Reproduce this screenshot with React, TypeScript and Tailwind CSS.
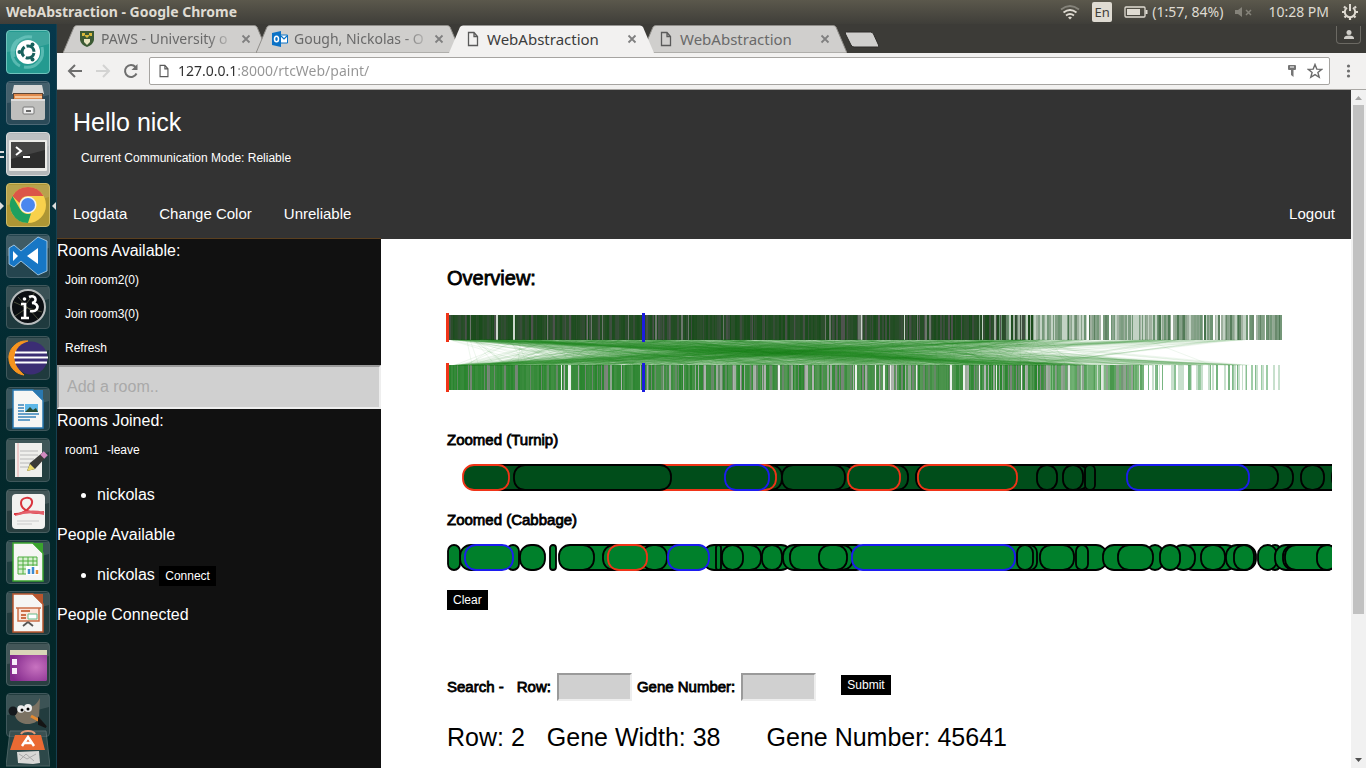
import React, { ReactNode } from "react";

/* ---------- deterministic data for the genome overview ---------- */

function makeRandom(seed: number) {
  let s = seed;
  return () => {
    s = (s + 0x6d2b79f5) | 0;
    let t = Math.imul(s ^ (s >>> 15), 1 | s);
    t = (t + Math.imul(t ^ (t >>> 7), 61 | t)) ^ t;
    return ((t ^ (t >>> 14)) >>> 0) / 4294967296;
  };
}

type Stripe = { x: number; w: number; color: string };

function mix(a: number[], b: number[], t: number) {
  return `rgb(${a.map((v, i) => Math.round(v + (b[i] - v) * t)).join(",")})`;
}

const OVERVIEW_WIDTH = 835;
const WHITE = [255, 255, 255];

function buildStripes(seed: number, colorAt: (x: number, rnd: () => number) => string) {
  const rnd = makeRandom(seed);
  const stripes: Stripe[] = [];
  let x = 0;
  while (x < OVERVIEW_WIDTH) {
    const w = Math.min(OVERVIEW_WIDTH - x, 1 + Math.floor(rnd() * 2));
    stripes.push({ x, w, color: colorAt(x, rnd) });
    x += w;
  }
  return stripes;
}

const TURNIP = buildStripes(11, (x, rnd) => {
  const light = Math.min(1, Math.max(0, (x - 520) / 90));
  const pick = rnd();
  const r = rnd();
  if (pick < light) {
    if (r < Math.max(0, x - 600) / 1800) return "rgb(252,253,252)";
    if (r < 0.28) return mix([120, 155, 124], WHITE, 0.55);
    if (r < 0.42) return mix([70, 115, 76], [110, 140, 113], rnd());
    return mix([105, 145, 111], [165, 180, 165], rnd());
  }
  if (r < 0.006) return "rgb(205,215,205)";
  if (r < 0.05) return "rgb(108,118,108)";
  if (r < 0.3) return mix([45, 75, 47], [80, 82, 80], rnd());
  return mix([24, 76, 26], [46, 78, 46], rnd());
});

const CABBAGE = buildStripes(29, (x, rnd) => {
  const r = rnd();
  const t = rnd();
  if (x > 695) {
    if (r < 0.5) return "rgb(255,255,255)";
    if (r < 0.78) return "rgb(200,224,205)";
    return mix([110, 175, 120], [160, 205, 168], t);
  }
  const pale = Math.min(0.22, x / 1500);
  if (x > 600) {
    if (r < 0.12) return mix([185, 210, 188], [225, 232, 225], t);
    if (r < 0.3) return mix([115, 150, 118], [150, 165, 150], t);
    return mix([70, 150, 74], [135, 190, 138], t);
  }
  if (r < pale * 0.14) return "rgb(235,242,235)";
  if (r < pale) return mix([140, 165, 142], [175, 180, 175], t);
  if (r < pale + 0.2) return mix([90, 140, 92], [125, 132, 125], t);
  return mix([40, 132, 45], [88, 152, 88], t * (0.35 + pale * 3));
});

const LINKS = (() => {
  const rnd = makeRandom(5);
  const pick = (dense: number, tail: number) => 3 + (rnd() < 0.7 ? rnd() * dense : rnd() * tail);
  return Array.from({ length: 1100 }, () => ({ top: pick(600, 800), bottom: pick(640, 800) }));
})();

function Overview() {
  return (
    <svg className="mt-5 block h-[79px] w-full overflow-visible" role="img" aria-label="Genome overview">
      <g shapeRendering="crispEdges">
        {TURNIP.map((s) => (
          <rect key={s.x} x={s.x} y={2} width={s.w} height={25} fill={s.color} />
        ))}
        {CABBAGE.map((s) => (
          <rect key={s.x} x={s.x} y={52} width={s.w} height={25} fill={s.color} />
        ))}
      </g>
      <g stroke="#228b22" strokeOpacity={0.08} strokeWidth={1}>
        {LINKS.map((l, i) => (
          <line key={i} x1={l.top} y1={27} x2={l.bottom} y2={52} />
        ))}
      </g>
      <g strokeWidth={3}>
        <path d="M.5 0V29M.5 50V79" stroke="#f03418" />
        <path d="M196.500 0V29M196.500 50V79" stroke="#1c1ce0" />
      </g>
    </svg>
  );
}

/* ---------- zoomed gene strips ---------- */

type Gene = [start: number, end: number, stroke?: "r" | "b"];

const STROKES = { r: "#f03418", b: "#1c1cf0", k: "#000000" };

const TURNIP_GENES: Gene[] = [
  [24, 960], [100, 335], [190, 329, "r"], [67, 224], [16, 62, "r"], [278, 322, "b"],
  [380, 407], [335, 398], [410, 461], [401, 453, "r"], [469, 642], [471, 570, "r"],
  [590, 610], [616, 636], [638, 648], [790, 846], [740, 831],
  [680, 802, "b"], [854, 877], [885, 930],
];

const CABBAGE_GENES: Gene[] = [
  [13, 60], [1, 13], [60, 72], [18, 66, "b"], [73, 98], [103, 109], [125, 190], [112, 147],
  [156, 210], [175, 260], [195, 220], [161, 200, "r"], [256, 300], [221, 262, "b"],
  [269, 274], [290, 345], [280, 314], [275, 296], [315, 335], [336, 380], [343, 420], [380, 406],
  [372, 400], [540, 640], [405, 568, "b"], [575, 590], [570, 586], [600, 660], [593, 627],
  [629, 641], [656, 700], [700, 716], [671, 706], [735, 790], [725, 748], [713, 733],
  [754, 778], [779, 809], [787, 807], [822, 834], [811, 830], [828, 860], [836, 890], [838, 890],
  [870, 890],
];

function GeneStrip({ genes, fill, label }: { genes: Gene[]; fill: string; label: string }) {
  return (
    <svg className="mt-[13px] block h-[27px] w-full" role="img" aria-label={label}>
      {genes.map(([a, b, s], i) => (
        <rect
          key={i}
          x={a}
          y={1}
          width={b - a}
          height={25}
          rx={Math.min(11, (b - a) / 2)}
          fill={fill}
          stroke={STROKES[s ?? "k"]}
          strokeWidth={1.8}
        />
      ))}
    </svg>
  );
}

/* ---------- launcher ---------- */

function Doc({ color, children }: { color: string; children: ReactNode }) {
  return (
    <>
      <path d="M7 3h20l10 10v28H7z" fill="#f6f6f4" stroke={color} strokeWidth="1.500" />
      <path d="M26 3h11v11z" fill={color} />
      {children}
    </>
  );
}

const LAUNCHERS: { name: string; tile: string; icon: ReactNode }[] = [
  {
    name: "Dash",
    tile: "bg-[#249a90] border-[#6fc4bc]",
    icon: (
      <>
        <path d="M8 27C5 15 14 5 26 7M36 17c3 12-6 22-18 20M14 36C4 31 3 17 12 10" stroke="#7cd0c8" strokeWidth="3" fill="none" opacity=".6" />
        <circle cx="22" cy="22" r="12" fill="#fff" />
        <circle cx="22" cy="22" r="6" fill="none" stroke="#17605c" strokeWidth="3" strokeDasharray="10.500 2" strokeDashoffset="-1" />
        <circle cx="13.500" cy="22" r="2" fill="#17605c" />
        <circle cx="26.500" cy="14.500" r="2" fill="#17605c" />
        <circle cx="26.500" cy="29.500" r="2" fill="#17605c" />
      </>
    ),
  },
  {
    name: "Files",
    tile: "bg-[#2b4a58] border-[#4d6875]",
    icon: (
      <>
        <path d="M6 13 8 4h28l2 9z" fill="#d8d8d6" />
        <path d="M7 12h30v6H7z" fill="#5e4636" />
        <path d="M8 13h28v5H8z" fill="#e08a4c" />
        <path d="M9 15h27v2H9z" fill="#f6c79c" />
        <path d="M5 18h34v19a2 2 0 0 1-2 2H7a2 2 0 0 1-2-2z" fill="#bfbfbd" />
        <path d="M5 18h34v2H5z" fill="#ddd" />
        <rect x="17" y="26" width="11" height="7" rx="1" fill="#eee" stroke="#777" />
        <path d="M20 29h5v2h-5z" fill="#666" />
      </>
    ),
  },
  {
    name: "Terminal",
    tile: "bg-[#b4b8ba] border-[#d8dadb]",
    icon: (
      <>
        <rect x="3" y="8" width="38" height="31" rx="1" fill="#ecece9" />
        <rect x="5" y="10" width="34" height="26" fill="#2d2d2d" />
        <path d="M5 10h34v8L5 27z" fill="#444" />
        <path d="m10 15 5 4-5 4M17 25h7" stroke="#fff" strokeWidth="2" fill="none" />
      </>
    ),
  },
  {
    name: "Chrome",
    tile: "bg-[#ae9634] border-[#cdbb6a]",
    icon: (
      <>
        <circle cx="22" cy="22" r="18" fill="#f8d14c" />
        <path d="M6.400 13A18 18 0 0 1 37.600 13H22a9 9 0 0 0-8.500 7z" fill="#db5548" />
        <path d="M6.400 13 14.200 26.500A9 9 0 0 0 25 30.500L22 40A18 18 0 0 1 6.400 13" fill="#1fa05f" />
        <circle cx="22" cy="22" r="8.500" fill="#f4f4f4" />
        <circle cx="22" cy="22" r="7" fill="#4a87ee" />
      </>
    ),
  },
  {
    name: "Visual Studio Code",
    tile: "bg-[#25454f] border-[#435f68]",
    icon: (
      <>
        <path d="M32 3 41 7v30l-9 4-17-14-7 6-5-3V14l5-3 7 6z" fill="#1777c5" stroke="#b9d9f2" strokeWidth=".8" />
        <path d="M32 14v16L21 22zM7 17v10l5-5z" fill="#fff" />
      </>
    ),
  },
  {
    name: "i3",
    tile: "bg-[#1f3a3e] border-[#40585c]",
    icon: (
      <>
        <circle cx="22" cy="22" r="17" fill="#0b0e12" stroke="#b8bcbd" strokeWidth="2" />
        <path d="m8 17 13 6L9 31M12 12l20 22M29 7 18 22l18 5" stroke="#65694e" strokeWidth=".7" fill="none" />
        <path d="M15 19h4v14M15 33h8M23 12c7-3 9 5 3 6 8 0 7 10-2 8" stroke="#fff" strokeWidth="2.600" fill="none" />
        <circle cx="18.500" cy="14" r="1.800" fill="#fff" />
      </>
    ),
  },
  {
    name: "Eclipse",
    tile: "bg-[#1f3a3e] border-[#40585c]",
    icon: (
      <>
        <path d="M22 5A17 17 0 0 0 18 39 20 20 0 0 1 22 5" fill="#f7941e" stroke="#f7941e" />
        <circle cx="25" cy="22" r="16.500" fill="#3b2d74" />
        <path d="M9 16.500h32M8 21.500h34M9 26.500h32" stroke="#fff" strokeWidth="2.200" />
      </>
    ),
  },
  {
    name: "Writer",
    tile: "bg-[#1f3f47] border-[#40585c]",
    icon: (
      <Doc color="#2a78b0">
        <path d="M12 18h6M12 21h6M12 24h6M12 27h21M12 30h18M12 33h12" stroke="#3984bb" strokeWidth="1.500" />
        <path d="M19 17h13v8H19z" fill="#5db7e8" />
        <path d="m19 25 5-5 3 3 3-2 2 4z" fill="#274b32" />
      </Doc>
    ),
  },
  {
    name: "Text Editor",
    tile: "bg-[#243f40] border-[#40585c]",
    icon: (
      <>
        <path d="M9 5h27v34H9z" fill="#efefec" />
        <path d="M12 5v34" stroke="#e8a8a8" />
        <path d="M14 13h18M14 17h18M14 21h14M14 25h12M14 29h8" stroke="#b8b8b8" />
        <path d="m21 33 3-8 12-10 4 4-11 12z" fill="#3b3b38" />
        <path d="m36 15 4 4" stroke="#d18abf" strokeWidth="5" />
        <path d="m21 33 3-7 5 5z" fill="#ecdb6a" />
      </>
    ),
  },
  {
    name: "Document Viewer",
    tile: "bg-[#2a3f40] border-[#495f61]",
    icon: (
      <>
        <rect x="6" y="5" width="33" height="35" rx="4" fill="#f2f2f0" />
        <path d="M8 25C18 26 27 17 26 12 25 7 15 8 15 14c0 7 11 12 23 9" stroke="#d9343d" strokeWidth="2" fill="none" />
        <path d="M9 26q13-7 29-3v3q-14-4-29 1z" fill="#e4606a" />
        <path d="M11 32h22M11 35h15" stroke="#c9c9c9" strokeWidth="1.200" />
      </>
    ),
  },
  {
    name: "Calc",
    tile: "bg-[#1f3e40] border-[#40585c]",
    icon: (
      <Doc color="#3aa32e">
        <path d="M12 17h19v17H12z" fill="#d9f0d2" />
        <path d="M12 17h19v17H12zM12 21h19M12 25h19M12 29h19M17 17v17M22 17v17M27 17v17" stroke="#4eae3f" fill="none" />
        <path d="M20 26h13v9H20z" fill="#fff" />
        <path d="M23 34v-5M27 34v-7" stroke="#3d8bd0" strokeWidth="2.500" />
        <path d="M31 34v-4" stroke="#e48e35" strokeWidth="2.500" />
      </Doc>
    ),
  },
  {
    name: "Impress",
    tile: "bg-[#223c3e] border-[#40585c]",
    icon: (
      <Doc color="#b8562e">
        <path d="M12 17h21v13H12zM10 17h25" stroke="#cb6f47" strokeWidth="1.500" fill="#fbe5da" />
        <path d="M15 20h9M15 24h5M15 27h5" stroke="#cb6f47" strokeWidth="2" />
        <path d="M22 23h9v5h-9z" fill="#fff" stroke="#6b8" />
        <path d="m22 31-5 4M22 31l5 4" stroke="#555" strokeWidth="1.800" />
      </Doc>
    ),
  },
  {
    name: "Workspace",
    tile: "bg-[#293f41] border-[#495f61]",
    icon: (
      <>
        <defs>
          <radialGradient id="desk" cx=".7" cy=".55" r=".7">
            <stop offset="0" stopColor="#c873c0" />
            <stop offset="1" stopColor="#83298c" />
          </radialGradient>
        </defs>
        <rect x="4" y="8" width="37" height="31" rx="1.500" fill="url(#desk)" />
        <path d="M4 8h37v5H4z" fill="#d9d5b8" />
        <path d="M6 17h5v6H6zM6 26h5v6H6z" fill="#f8eefa" />
      </>
    ),
  },
  {
    name: "GIMP",
    tile: "bg-[#223c3e] border-[#40585c]",
    icon: (
      <>
        <path d="m34 5-1 20c-2 8-22 9-24-3 2-4 5-8 10-8 6 1 11-1 15-9" fill="#7b7263" />
        <circle cx="7" cy="18" r="4.500" fill="#15191d" />
        <circle cx="15" cy="16" r="3.800" fill="#eee" />
        <circle cx="22" cy="15" r="4" fill="#eee" />
        <circle cx="16" cy="17" r="1.500" />
        <circle cx="22" cy="16" r="1.500" />
        <path d="m25 23 9 5" stroke="#e48a32" strokeWidth="3" />
        <path d="m33 26 7 8-7-3z" fill="#151515" stroke="#151515" strokeWidth="2" />
      </>
    ),
  },
];

function Launcher() {
  return (
    <nav aria-label="Launcher" className="flex w-[57px] shrink-0 flex-col items-start gap-[7px] overflow-hidden border-r border-[#17404f] bg-gradient-to-b from-[#06384c] via-[#03292d] to-[#032627] pt-[6px] pl-[6px]">
      {LAUNCHERS.map((l) => (
        <button
          key={l.name}
          type="button"
          aria-label={l.name}
          className={`relative h-11 w-11 shrink-0 rounded-sm border ${l.tile}`}
        >
          <svg viewBox="0 0 44 44" className="absolute -inset-px h-11 w-11">
            <path d="M1 2h42v12Q22 20 1 22z" fill="#fff" opacity=".12" />
            {l.icon}
          </svg>
          {l.name === "Terminal" && (
            <svg viewBox="0 0 4 8" className="absolute top-[18px] -left-[7px] h-2 w-1">
              <path d="M0 1h4M0 6h4" stroke="#ddd" strokeWidth="2" />
            </svg>
          )}
          {l.name === "Chrome" && (
            <svg viewBox="0 0 56 8" className="absolute top-[18px] -left-[7px] h-2 w-14">
              <path d="m0 0 4 4-4 4zM56 0l-4 4 4 4z" fill="#ddd" />
            </svg>
          )}
        </button>
      ))}
      <button type="button" aria-label="Software" className="relative -mt-4 h-11 w-11 shrink-0">
        <svg viewBox="0 0 44 44" className="h-11 w-11">
          <path d="M4 3h36l4 35H0z" fill="#4a5f60" opacity=".6" stroke="#7a8a8b" />
          <path d="M9 7h26l4 15H4z" fill="#ea6a33" />
          <path d="M15 6c2-4 12-4 14 0" stroke="#e39a78" strokeWidth="2" fill="none" />
          <path d="m16 18 6-9 6 9M18 15h8" stroke="#fff" strokeWidth="2.500" fill="none" />
          <path d="m11 24 22-1 1 12-7 1-15-1z" fill="#d8d8d6" />
          <path d="m13 26 8 5 9-5M14 32l6-6 8 7" stroke="#aaa" fill="none" />
        </svg>
      </button>
    </nav>
  );
}

/* ---------- desktop top bar ---------- */

function TopBar() {
  return (
    <header className="flex h-6 shrink-0 items-center justify-between bg-gradient-to-b from-[#5b584c] to-[#3f3e39] pr-[7px] pl-[6px] text-[14px] leading-6 text-[#dfdbd2]">
      <span className="font-bold">WebAbstraction - Google Chrome</span>
      <div className="flex items-center">
        <svg viewBox="0 0 20 16" className="mr-3 h-4 w-5" fill="none" strokeWidth="1.800">
          <path d="M1 5.500q9-7 18 0" stroke="#85837a" />
          <path d="M3.500 8.500q6.500-5 13 0M6 11.500q4-3 8 0" stroke="#dfdbd2" />
          <path d="m8 13.500 2-1 2 1-2 2z" fill="#dfdbd2" />
        </svg>
        <span className="mr-3 h-5 w-5 rounded-xs bg-[#dfdbd2] text-center text-[13px] leading-5 text-[#3f3e39]">En</span>
        <svg viewBox="0 0 24 12" className="mr-1 h-3 w-6" fill="none" stroke="#dfdbd2" strokeWidth="1.300">
          <rect x="1" y="1" width="20" height="10" rx="1" />
          <path d="M22.500 4v4" strokeWidth="2" />
          <path d="M3 3h13v6H3z" fill="#dfdbd2" stroke="none" />
        </svg>
        <span className="mr-3">(1:57, 84%)</span>
        <svg viewBox="0 0 18 12" className="mr-[15px] h-3 w-[18px]" fill="#85837a">
          <path d="M0 4h3l4-3v10L3 8H0z" />
          <path d="m11 4 5 5M16 4l-5 5" stroke="#85837a" strokeWidth="1.500" />
        </svg>
        <span className="mr-3">10:28 PM</span>
        <svg viewBox="0 0 18 18" className="h-[18px] w-[18px]" fill="none" stroke="#dfdbd2">
          <path d="M6 4.800a5.200 5.200 0 1 0 6 0" strokeWidth="2" />
          <path d="M9 1v7" strokeWidth="2" />
          <path d="M3.800 9H1M17 9h-2.800M9 14.500V17M4.500 5 3 3.500M13.500 5 15 3.500M5 13l-1.500 1.500M13 13l1.500 1.500" strokeWidth="2.200" />
        </svg>
      </div>
    </header>
  );
}

/* ---------- browser chrome ---------- */

function PageIcon({ className }: { className: string }) {
  return (
    <svg viewBox="0 0 12 16" className={className} fill="none" stroke="#5a5a5a" strokeWidth="1.300">
      <path d="M1.500 1.500h5.500l3.500 4v9h-9zM7 1.500v4h3.500" />
    </svg>
  );
}

function Shield() {
  return (
    <svg viewBox="0 0 16 16" className="h-4 w-4">
      <path d="M1 0h14v9q-1 5-7 7-6-2-7-7z" fill="#3c5a34" />
      <path d="M3 2h3v3H3zM10 2h3v3h-3zM5 4l3 3 3-3" fill="#d8b93c" />
      <path d="M5 8h6v3l-3 3-3-3z" fill="#e9e4c0" />
    </svg>
  );
}

function OutlookIcon() {
  return (
    <svg viewBox="0 0 16 16" className="h-4 w-4">
      <path d="M0 2 9 0v16l-9-2z" fill="#0b72c6" />
      <ellipse cx="4.500" cy="8" rx="2" ry="2.800" fill="none" stroke="#fff" strokeWidth="1.500" />
      <path d="M9 4h6.500v8H9" fill="#fff" stroke="#0b72c6" />
      <path d="m9 5 3 3 3.500-3.500" fill="none" stroke="#0b72c6" strokeWidth="1.200" />
    </svg>
  );
}

function Tab({ title, icon, active, fade }: { title: string; icon: ReactNode; active?: boolean; fade?: boolean }) {
  return (
    <div className={`relative -mr-3 flex h-7 w-[205px] items-center pr-[14px] pl-4 ${active ? "z-10" : ""}`}>
      <svg viewBox="0 0 205 28" preserveAspectRatio="none" className="absolute inset-0 h-full w-full">
        <path d="M0 28 11 2q1-1.500 3-1.500h177q2 0 3 1.500l11 26z" fill={active ? "#f2f1f0" : "#d0cfcd"} stroke={active ? "none" : "#8f8d89"} />
      </svg>
      <button
        type="button"
        role="tab"
        aria-selected={!!active}
        className={`relative flex min-w-0 flex-1 items-center gap-[6px] leading-6 ${active ? "text-[#3c3c3c]" : "text-[#696969]"} ${fade ? "text-[14px]" : "text-[15px]"}`}
      >
        <span className="flex w-4 shrink-0 justify-center">{icon}</span>
        <span className={`whitespace-nowrap ${fade ? "[mask-image:linear-gradient(to_right,#000_84%,#0004)]" : ""}`}>{title}</span>
      </button>
      <button type="button" aria-label="Close tab" className="relative ml-1 h-4 w-4 shrink-0">
        <svg viewBox="0 0 16 16" className="h-4 w-4" stroke="#808080" strokeWidth="1.800">
          <path d="m4.500 4.500 7 7M11.500 4.500l-7 7" />
        </svg>
      </button>
    </div>
  );
}

function TabStrip() {
  return (
    <div className="flex h-[29px] shrink-0 items-end justify-between bg-[#3c3b37] pl-[6px]">
      <div role="tablist" className="flex items-center">
        <Tab title="PAWS - University o" icon={<Shield />} fade />
        <Tab title="Gough, Nickolas - O" icon={<OutlookIcon />} fade />
        <Tab title="WebAbstraction" icon={<PageIcon className="h-4 w-3" />} active />
        <Tab title="WebAbstraction" icon={<PageIcon className="h-4 w-3" />} />
        <button type="button" aria-label="New tab" className="ml-2 h-7">
          <svg viewBox="0 0 36 28" className="h-7 w-9">
            <path d="M3.500 7h24q2 0 3 2l5 11q1 2-1 2H11q-2 0-3-2L2.500 9q-1-2 1-2z" fill="#d0cfcd" stroke="#2c2b28" />
          </svg>
        </button>
      </div>
      <button type="button" aria-label="Profile" className="mt-[2px] mr-[5px] flex h-[18px] w-[25px] items-center justify-center self-start rounded-b-sm border border-t-0 border-[#6b6963]">
        <svg viewBox="0 0 12 12" className="h-3 w-3" fill="#cfcdc8">
          <circle cx="6" cy="3.500" r="2.500" />
          <path d="M1 10V8.500q1-2 5-2t5 2V10z" />
        </svg>
      </button>
    </div>
  );
}

function Toolbar() {
  return (
    <div className="flex h-[37px] shrink-0 items-center border-b border-[#a9a7a4] bg-[#f2f1f0] pr-[10px] pl-2">
      <button type="button" aria-label="Back" className="mr-2 h-5 w-5">
        <svg viewBox="0 0 20 20" className="h-5 w-5" fill="none" stroke="#6e6e6e" strokeWidth="2">
          <path d="M17 10H4M10 4l-6 6 6 6" />
        </svg>
      </button>
      <button type="button" aria-label="Forward" className="mr-2 h-5 w-5" disabled>
        <svg viewBox="0 0 20 20" className="h-5 w-5" fill="none" stroke="#d3d3d2" strokeWidth="2">
          <path d="M3 10h13M10 4l6 6-6 6" />
        </svg>
      </button>
      <button type="button" aria-label="Reload" className="mr-2 h-5 w-5">
        <svg viewBox="0 0 20 20" className="h-5 w-5" fill="none" stroke="#6e6e6e" strokeWidth="2">
          <path d="M15.500 12.500a6 6 0 1 1-1-6.500" />
          <path d="M16.500 3v6h-6z" fill="#6e6e6e" stroke="none" />
        </svg>
      </button>
      <div className="flex h-7 min-w-0 flex-1 items-center rounded-xs border border-[#a6a4a1] bg-white pr-[6px] pl-2">
        <PageIcon className="h-[14px] w-3 shrink-0" />
        <input
          aria-label="Address"
          defaultValue="127.0.0.1:8000/rtcWeb/paint/"
          className="ml-2 min-w-0 flex-1 bg-[linear-gradient(to_right,#2e2e2e_59px,#949494_59px)] bg-clip-text text-[14px] leading-6 text-transparent outline-none"
        />
        <svg viewBox="0 0 10 14" className="mr-[10px] h-[14px] w-[10px]" fill="#757575">
          <path d="M2 1h6q1 0 1 1v3q0 1-1 1H6.500v7L4 11V6H2Q1 6 1 5V2q0-1 1-1z" />
          <path d="M3 3h4" stroke="#fff" />
        </svg>
        <svg viewBox="0 0 16 16" className="h-4 w-4" fill="none" stroke="#6b6b6b" strokeWidth="1.400">
          <path d="m8 1.500 1.800 4.600 4.900.3-3.800 3.100 1.300 4.800L8 11.600l-4.200 2.700 1.300-4.800-3.800-3.100 4.900-.3z" />
        </svg>
      </div>
      <button type="button" aria-label="Menu" className="ml-[11px] h-5 w-[15px]">
        <svg viewBox="0 0 15 20" className="h-5 w-[15px]" fill="#6e6e6e">
          <circle cx="7.500" cy="5" r="1.600" />
          <circle cx="7.500" cy="10" r="1.600" />
          <circle cx="7.500" cy="15" r="1.600" />
        </svg>
      </button>
    </div>
  );
}

/* ---------- page ---------- */

function PageHeader() {
  return (
    <header className="flex h-[149px] shrink-0 flex-col bg-[#333333] px-4 text-white">
      <h1 className="mt-[14px] text-[25px] leading-9">Hello nick</h1>
      <p className="mt-2 pl-2 text-xs leading-5">Current Communication Mode: Reliable</p>
      <nav className="mt-auto flex gap-8 pb-[14px] text-[15px] leading-[22px]">
        <a href="#logdata">Logdata</a>
        <a href="#color">Change Color</a>
        <a href="#unreliable">Unreliable</a>
        <a href="#logout" className="ml-auto">Logout</a>
      </nav>
    </header>
  );
}

const FLAT = "block h-[34px] px-2 text-xs";
const BLACK = "h-5 bg-black px-[6px] text-xs leading-5 text-white";
const FIELD = "border-2 border-t-[#9a9a9a] border-r-[#eeeeee] border-b-[#eeeeee] border-l-[#9a9a9a] bg-[#d0d0d0] outline-none";

function Sidebar() {
  return (
    <aside className="-mt-px w-81 shrink-0 border-t border-[#5b4020] bg-[#111111] text-base leading-6 text-white">
      <h2>Rooms Available:</h2>
      <button type="button" className={FLAT}>Join room2(0)</button>
      <button type="button" className={FLAT}>Join room3(0)</button>
      <button type="button" className={FLAT}>Refresh</button>
      <input aria-label="Add a room" placeholder="Add a room.." className={`block h-11 w-full px-2 text-black placeholder:text-[#a9a9a9] ${FIELD}`} />
      <h2>Rooms Joined:</h2>
      <div className="flex">
        <button type="button" className={`${FLAT} pr-0`}>room1</button>
        <button type="button" className={FLAT}>-leave</button>
      </div>
      <ul className="my-4 list-disc pl-10">
        <li>nickolas</li>
      </ul>
      <h2>People Available</h2>
      <ul className="my-4 list-disc pl-10">
        <li>
          nickolas <button type="button" className={BLACK}>Connect</button>
        </li>
      </ul>
      <h2>People Connected</h2>
    </aside>
  );
}

const HEAVY = "text-[15px] leading-[22px] [-webkit-text-stroke:0.8px_#000]";

function Genome() {
  return (
    <main className="min-w-0 flex-1 pt-6 pr-[19px] pl-[66px] text-black">
      <h2 className="text-xl leading-[30px] [-webkit-text-stroke:0.8px_#000]">Overview:</h2>
      <Overview />
      <h3 className={`mt-[37px] ${HEAVY}`}>Zoomed (Turnip)</h3>
      <GeneStrip genes={TURNIP_GENES} fill="#004d1a" label="Turnip genes" />
      <h3 className={`mt-[18px] ${HEAVY}`}>Zoomed (Cabbage)</h3>
      <GeneStrip genes={CABBAGE_GENES} fill="#00802b" label="Cabbage genes" />
      <button type="button" className={`mt-[19px] block ${BLACK}`}>Clear</button>
      <form className={`mt-[63px] flex items-center ${HEAVY}`} onSubmit={(e) => e.preventDefault()}>
        <span className="mr-[13px]">Search -</span>
        <label htmlFor="row" className="mr-[6px]">Row:</label>
        <input id="row" className={`mr-[5px] h-7 w-[75px] px-1 ${FIELD}`} />
        <label htmlFor="gene" className="mr-[6px]">Gene Number:</label>
        <input id="gene" className={`mr-[25px] h-7 w-[75px] px-1 ${FIELD}`} />
        <button type="submit" className={`mt-[2px] self-start [-webkit-text-stroke:0] ${BLACK}`}>Submit</button>
      </form>
      <div className="mt-[18px] flex text-[25px] leading-9">
        <span className="mr-[22px]">Row: 2</span>
        <span className="mr-[46px]">Gene Width: 38</span>
        <span>Gene Number: 45641</span>
      </div>
    </main>
  );
}

function Scrollbar() {
  return (
    <div aria-hidden="true" className="flex w-[15px] shrink-0 flex-col items-center bg-[#f1f1f1]">
      <svg viewBox="0 0 15 15" className="h-[15px] w-[15px] shrink-0">
        <path d="m4 10 3.500-4 3.500 4z" fill="#a3a3a3" />
      </svg>
      <div className="h-3/4 w-[11px] bg-[#c1c1c1]" />
      <svg viewBox="0 0 15 15" className="mt-auto h-[15px] w-[15px] shrink-0">
        <path d="m4 5 3.500 4L11 5z" fill="#505050" />
      </svg>
    </div>
  );
}

export default function App() {
  return (
    <div className="flex h-screen flex-col overflow-hidden font-['Noto_Sans',sans-serif]">
      <TopBar />
      <div className="flex min-h-0 flex-1">
        <Launcher />
        <div className="flex min-w-0 flex-1 flex-col">
          <TabStrip />
          <Toolbar />
          <div className="flex min-h-0 flex-1 font-['Liberation_Sans',Arial,sans-serif]">
            <div className="flex min-w-0 flex-1 flex-col overflow-hidden bg-white">
              <PageHeader />
              <div className="flex min-h-0 flex-1">
                <Sidebar />
                <Genome />
              </div>
            </div>
            <Scrollbar />
          </div>
        </div>
      </div>
    </div>
  );
}
